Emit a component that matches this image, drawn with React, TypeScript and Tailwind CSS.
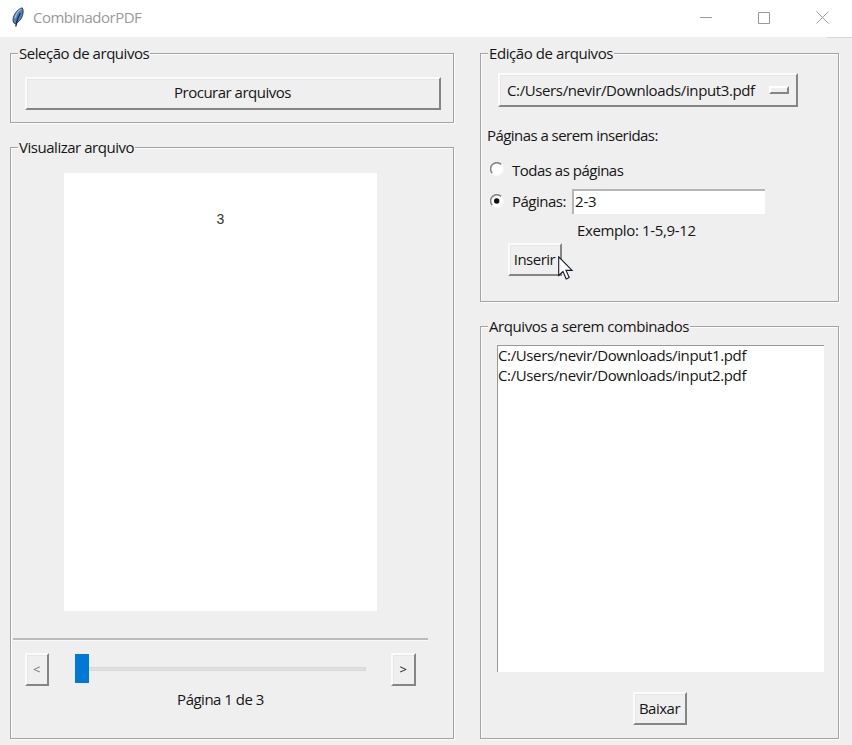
import type { ReactNode } from "react";

function Group({ title, className, titleClass, children }: { title: string; className: string; titleClass: string; children: ReactNode }) {
  return (
    <section
      className={`flex shrink-0 flex-col border border-[#a3a3a3] shadow-[inset_1px_1px_0_#fcfcfc,1px_1px_0_#fcfcfc] ${className}`}
    >
      <h2 className={`-mt-[10px] ml-[7px] h-5 shrink-0 self-start bg-[#efefef] px-px leading-[18px] whitespace-nowrap ${titleClass}`}>{title}</h2>
      {children}
    </section>
  );
}

function RaisedButton({ className, children }: { className: string; children: ReactNode }) {
  return (
    <button
      className={`flex shrink-0 items-center justify-center border-2 border-t-[#fbfbfb] border-r-[#858585] border-b-[#858585] border-l-[#fbfbfb] bg-[#efefef] whitespace-nowrap shadow-[inset_1px_1px_0_#e6e6e6] ${className}`}
    >
      {children}
    </button>
  );
}

function Radio({ checked }: { checked?: boolean }) {
  return (
    <svg width="14" height="14" viewBox="0 0 14 14" className="shrink-0 -translate-y-px">
      <circle cx="7" cy="7" r="6" fill="#fff" />
      <path d="M2.4 11.3A6 6 0 0 1 11.3 2.5" fill="none" stroke="#858585" strokeWidth="1.5" />
      <path d="M11.3 2.5A6 6 0 0 1 2.4 11.3" fill="none" stroke="#fafafa" strokeWidth="1.5" />
      {checked && <circle cx="6.7" cy="7" r="2.7" fill="#111" />}
    </svg>
  );
}

function Feather() {
  return (
    <svg width="13" height="21" viewBox="0 0 13 21" className="shrink-0">
      <path d="M10.2 .8C7.6 1.5 4.2 4 2.2 8.2C.9 11 .8 13 1.4 15.4L3.2 16.9C6.6 15.2 9.5 12.2 10.6 8.2C11.5 5.2 11.3 2 10.2 .8Z" fill="#4d83c6" stroke="#3b4350" strokeWidth="1" />
      <path d="M9.2 2C6 4 3.9 7 3 11" fill="none" stroke="#9fb9d8" strokeWidth="1.4" />
      <path d="M8.3 6C6.5 9 4.8 12 3.8 19.5" fill="none" stroke="#20293a" strokeWidth="1.4" />
    </svg>
  );
}

export default function App() {
  return (
    <div className="relative flex h-[745px] w-[852px] flex-col overflow-hidden bg-[#efefef] font-['Open_Sans','Noto_Sans',sans-serif] text-[15px] tracking-[-0.5px] text-[#161616]">
      <header className="flex h-[37px] shrink-0 items-center bg-white pr-[23px] pl-[12px] text-[#9a9a9a]">
        <div className="-mt-[3px]"><Feather /></div>
        <h1 className="-mt-[2px] ml-2 text-[15px] tracking-[-0.5px]">CombinadorPDF</h1>
        <div className="-mt-[2px] ml-auto flex items-center gap-[46px]">
          <svg width="12" height="13" viewBox="0 0 12 13"><path d="M0 6.5H12" stroke="currentColor" /></svg>
          <svg width="12" height="13" viewBox="0 0 12 13"><path d="M.5 1.5H11.5V12.5H.5Z" fill="none" stroke="currentColor" /></svg>
          <svg width="13" height="13" viewBox="0 0 13 13"><path d="M.5 .5L12.5 12.5M12.5 .5L.5 12.5" stroke="currentColor" /></svg>
        </div>
      </header>
      <div className="-mb-px ml-auto h-px w-[25px] shrink-0 bg-[#d5d5d5]" />

      <main className="flex flex-1 pt-4 pl-[10px]">
        <div className="flex w-[444px] shrink-0 flex-col">
          <Group title="Seleção de arquivos" titleClass="tracking-[-0.47px]" className="h-[70px]">
            <RaisedButton className="mt-[13px] ml-[14px] h-[33px] w-[416px] pr-px pb-[2px]">Procurar arquivos</RaisedButton>
          </Group>
          <Group title="Visualizar arquivo" titleClass="tracking-[-0.47px]" className="mt-6 h-[592px]">
            <div className="mt-[15px] ml-[53px] h-[438px] w-[313px] shrink-0 bg-white pt-[38px] text-center font-['Liberation_Sans',sans-serif] text-[14px] leading-4 tracking-normal text-[#333]">3</div>
            <div className="mt-[27px] ml-[2px] h-[3px] w-[415px] shrink-0 border-t-2 border-b border-t-[#bababa] border-b-[#fafafa]" />
            <div className="mt-[12px] ml-[14px] flex h-[33px] shrink-0 items-center">
              <RaisedButton className="h-[33px] w-[24px] pr-px text-[13px] text-[#777]">&lt;</RaisedButton>
              <div className="ml-[26px] h-[29px] w-[14px] -translate-y-px bg-[#0078d7]" />
              <div className="h-1 w-[277px] -translate-y-px border border-l-0 border-[#d8d8d8] bg-[#e0e0e0]" />
              <RaisedButton className="ml-[25px] h-[33px] w-[25px] pr-px text-[13px]">&gt;</RaisedButton>
            </div>
            <p className="mt-1 w-[419px] text-center leading-[18px]">Página 1 de 3</p>
          </Group>
        </div>

        <div className="ml-[26px] flex w-[359px] shrink-0 flex-col">
          <Group title="Edição de arquivos" titleClass="tracking-[-0.42px]" className="h-[249px]">
            <RaisedButton className="mt-[9px] ml-[17px] h-[34px] w-[300px]">
              <span className="w-[250px] text-left tracking-[-0.38px]">C:/Users/nevir/Downloads/input3.pdf</span>
              <span className="ml-[12px] h-[8px] w-[20px] border-2 border-t-white border-r-[#858585] border-b-[#858585] border-l-white" />
            </RaisedButton>
            <p className="mt-[19px] ml-[6px] h-5 leading-[18px] tracking-[-0.55px]">Páginas a serem inseridas:</p>
            <label className="mt-[14px] ml-[9px] flex h-5 items-center gap-[8px]">
              <Radio />
              <span>Todas as páginas</span>
            </label>
            <div className="mt-[9px] ml-[9px] flex h-[25px] items-center">
              <Radio checked />
              <span className="ml-[8px] w-[60px]">Páginas:</span>
              <span className="h-[25px] w-[193px] border-t-2 border-l-2 border-t-[#b5b5b5] border-l-[#b5b5b5] bg-white pl-px leading-[20px] tracking-[-0.2px]">2-3</span>
            </div>
            <p className="mt-[6px] ml-[96px] h-5 leading-5 tracking-[-0.36px]">Exemplo: 1-5,9-12</p>
            <RaisedButton className="mt-[3px] ml-[27px] h-[33px] w-[54px] pr-px pb-px">Inserir</RaisedButton>
          </Group>
          <Group title="Arquivos a serem combinados" titleClass="tracking-[-0.42px]" className="mt-6 h-[413px]">
            <ul className="mt-[8px] ml-[16px] h-[327px] w-[327px] shrink-0 border-t border-l border-[#999] bg-white leading-5 tracking-[-0.37px]">
              <li className="-mt-px">C:/Users/nevir/Downloads/input1.pdf</li>
              <li>C:/Users/nevir/Downloads/input2.pdf</li>
            </ul>
            <RaisedButton className="mt-[20px] ml-[152px] h-[33px] w-[54px] pr-px pb-px">Baixar</RaisedButton>
          </Group>
        </div>
      </main>

      <svg className="absolute top-[256px] left-[558px]" width="16" height="25" viewBox="0 0 16 25">
        <path d="M.7 .8V19.5L5 15.5L8.2 23L11.2 21.6L8 14.4H14.1Z" fill="#fff" stroke="#111827" strokeWidth="1.1" />
      </svg>
    </div>
  );
}
